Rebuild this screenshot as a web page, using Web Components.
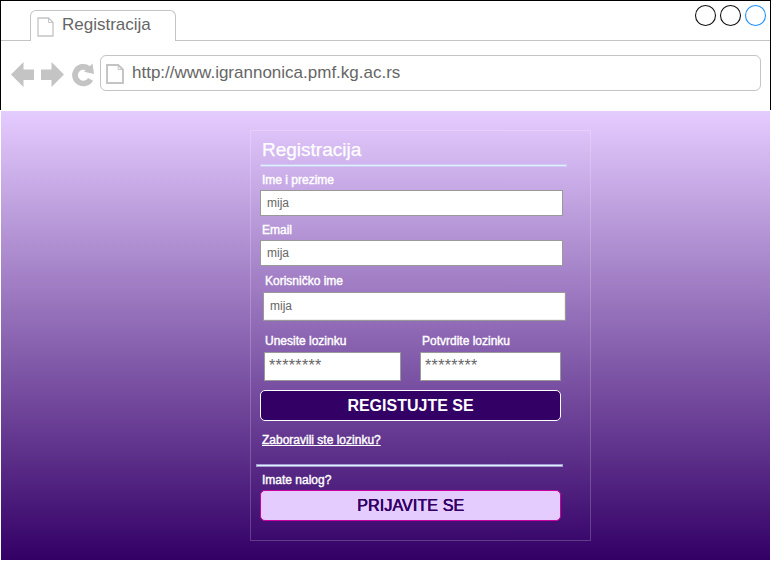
<!DOCTYPE html>
<html lang="sr">
<head>
<meta charset="utf-8">
<title>Registracija</title>
<style>
html,body{margin:0;background:#fff;width:771px;height:561px;overflow:hidden;font-family:"Liberation Sans",Arial,sans-serif}
.pair{display:flex}
</style>
</head>
<body>
<browser-frame label="Registracija" url="http://www.igrannonica.pmf.kg.ac.rs">
  <form-panel>
    <form-title>Registracija</form-title>
    <form-rule style="margin:4px 0 0 9px;width:307px"></form-rule>
    <text-field label="Ime i prezime" value="mija" style="margin:6px 0 0 9px;width:303px"></text-field>
    <text-field label="Email" value="mija" style="margin:7px 0 0 9px;width:303px"></text-field>
    <text-field label="Korisničko ime" value="mija" style="margin:8px 0 0 12px;width:303px;--h:29px;--pad:7px;--gap:4px;--inset:#eee"></text-field>
    <div class="pair" style="margin:13px 0 0 13px">
      <text-field label="Unesite lozinku" value="********" masked style="width:137px;--h:29px;--gap:4px;--lpad:1px"></text-field>
      <text-field label="Potvrdite lozinku" value="********" masked style="width:141px;margin-left:19px;--h:29px;--gap:4px"></text-field>
    </div>
    <action-button style="margin:9px 0 0 9px;--bg:#330066;--line:#fff;--ink:#fff;--weight:bold">REGISTUJTE SE</action-button>
    <soft-label style="margin:12px 0 0 11px;text-decoration:underline">Zaboravili ste lozinku?</soft-label>
    <form-rule style="margin:17px 0 0 5px;width:307px"></form-rule>
    <soft-label style="margin:6px 0 0 11px">Imate nalog?</soft-label>
    <action-button style="margin:3px 0 0 9px;--bg:#e5ccff;--line:#cc00a0;--ink:#330066;--space:.12px;--glow:.6px 0 0 #330066,.3px 0 0 #330066">PRIJAVITE SE</action-button>
  </form-panel>
</browser-frame>
<script>
function define(name, html, setup) {
  const template = document.createElement('template');
  template.innerHTML = html;
  customElements.define(name, class extends HTMLElement {
    constructor() {
      super();
      this.attachShadow({mode: 'open'}).append(template.content.cloneNode(true));
    }
    connectedCallback() {
      if (setup) setup(this, this.shadowRoot);
    }
  });
}

define('page-icon', `<style>:host{display:block}svg{display:block;width:100%;height:100%}</style>
<svg viewBox="0 0 17 20" preserveAspectRatio="none" fill="none" stroke="#c4c4c4"><path vector-effect="non-scaling-stroke" style="stroke-width:var(--sw,1.3px)" d="M1 1H11.500L16 5.5V19H1Z"/><path vector-effect="non-scaling-stroke" d="M11.500 1V5.5H16"/></svg>`);

define('browser-tab', `<style>
:host{display:flex;box-sizing:border-box;width:146px;height:31px;margin:9px 0 0 29px;border:1px solid #c4c4c4;border-bottom:0;border-radius:6px 6px 0 0;background:#fff;padding:6px 0 0 6px;color:#666;font-size:17px;line-height:17px}
page-icon{width:17px;height:20px}
span{margin-left:8px;margin-top:-1px}
</style><page-icon></page-icon><span><slot></slot></span>`);

define('window-buttons', `<style>:host{display:block;margin:3px 3px 0 auto}svg{display:block}</style>
<svg width="73" height="23" fill="none" stroke-width="1.1"><circle cx="11.500" cy="11.500" r="10" stroke="#111"/><circle cx="36.500" cy="11.500" r="10" stroke="#111"/><circle cx="61.500" cy="11.500" r="10" stroke="#1e90ff"/></svg>`);

define('nav-icons', `<style>:host{display:block;width:84px;height:26px;margin:7px 0 0 10px}svg{display:block}</style>
<svg width="84" height="26" viewBox="11 62 84 26"><g fill="#c4c4c4"><path d="M11 74.5L23.5 62V69.5H34V80H23.5V87Z"/><path d="M64 74.5L51.500 62V69.5H41V80H51.500V87Z"/></g><path d="M90.500 79.3A8.300 8.300 0 1 1 88.500 68.700" fill="none" stroke="#c4c4c4" stroke-width="5.700"/><path d="M92.500 63.500L94 74L84 71.800Z" fill="#c4c4c4"/></svg>`);

define('address-bar', `<style>
:host{display:flex;box-sizing:border-box;width:661px;height:36px;margin-left:5px;border:1px solid #c4c4c4;border-radius:6px;padding:8px 0 0 5px;color:#666;font-size:17px;line-height:18px}
page-icon{width:18px;height:20px;--sw:2px}
span{margin-left:8px}
</style><page-icon></page-icon><span><slot></slot></span>`);

define('browser-frame', `<style>
:host{display:block;width:771px;height:561px}
header{box-sizing:border-box;height:110px;border:solid #000;border-width:1px 1px 0 1px}
.tabs{display:flex;align-items:flex-start;box-sizing:border-box;height:40px;background:linear-gradient(#c4c4c4,#c4c4c4) 0 39px/100% 1px no-repeat}
.tools{display:flex;padding-top:14px}
main{box-sizing:border-box;width:769px;height:449px;margin:1px 0 0 1px;padding:19px 0 0 249px;background:linear-gradient(#e5ccff,#330066)}
</style>
<header><div class="tabs"><browser-tab></browser-tab><window-buttons></window-buttons></div><div class="tools"><nav-icons></nav-icons><address-bar></address-bar></div></header>
<main><slot></slot></main>`, (host, root) => {
  root.querySelector('browser-tab').textContent = host.getAttribute('label');
  root.querySelector('address-bar').textContent = host.getAttribute('url');
});

define('form-panel', `<style>:host{display:flex;flex-direction:column;align-items:flex-start;box-sizing:border-box;width:341px;height:411px;border:1px solid rgba(255,255,255,.2)}</style><slot></slot>`);

define('form-title', `<style>:host{display:block;margin:9px 0 0 11px;font-size:19px;line-height:20px;color:#fff;-webkit-text-stroke:.25px #fff}</style><slot></slot>`);

define('form-rule', `<style>:host{display:block;box-sizing:border-box;height:3px;background:#e0f0ff;border:1px solid rgba(205,215,250,.65);background-clip:content-box}</style>`);

define('soft-label', `<style>:host{display:block;font-size:12px;line-height:14px;color:#fff;white-space:nowrap;-webkit-text-stroke:.4px #fff}</style><slot></slot>`);

define('text-field', `<style>
:host{display:block}
soft-label{margin-left:var(--lpad,2px)}
.box{box-sizing:border-box;height:var(--h,26px);margin-top:var(--gap,3px);border:1px solid #999;background:#fff;box-shadow:inset -1px -1px var(--inset,#fff);padding:var(--pad,6px) 0 0 6px;font-size:12px;line-height:13px;color:#666}
:host([masked]) .box{font-size:16px;line-height:18px;padding:4px 0 0 4px;letter-spacing:.35px}
</style><soft-label></soft-label><div class="box"></div>`, (host, root) => {
  root.querySelector('soft-label').textContent = host.getAttribute('label');
  root.querySelector('.box').textContent = host.getAttribute('value');
});

define('action-button', `<style>:host{display:block;box-sizing:border-box;width:301px;height:31px;border:1px solid var(--line);border-radius:5px;background:var(--bg);color:var(--ink);font-size:16px;font-weight:var(--weight,normal);letter-spacing:var(--space,normal);line-height:29px;text-align:center;text-shadow:var(--glow,none)}</style><slot></slot>`);
</script>
</body>
</html>
